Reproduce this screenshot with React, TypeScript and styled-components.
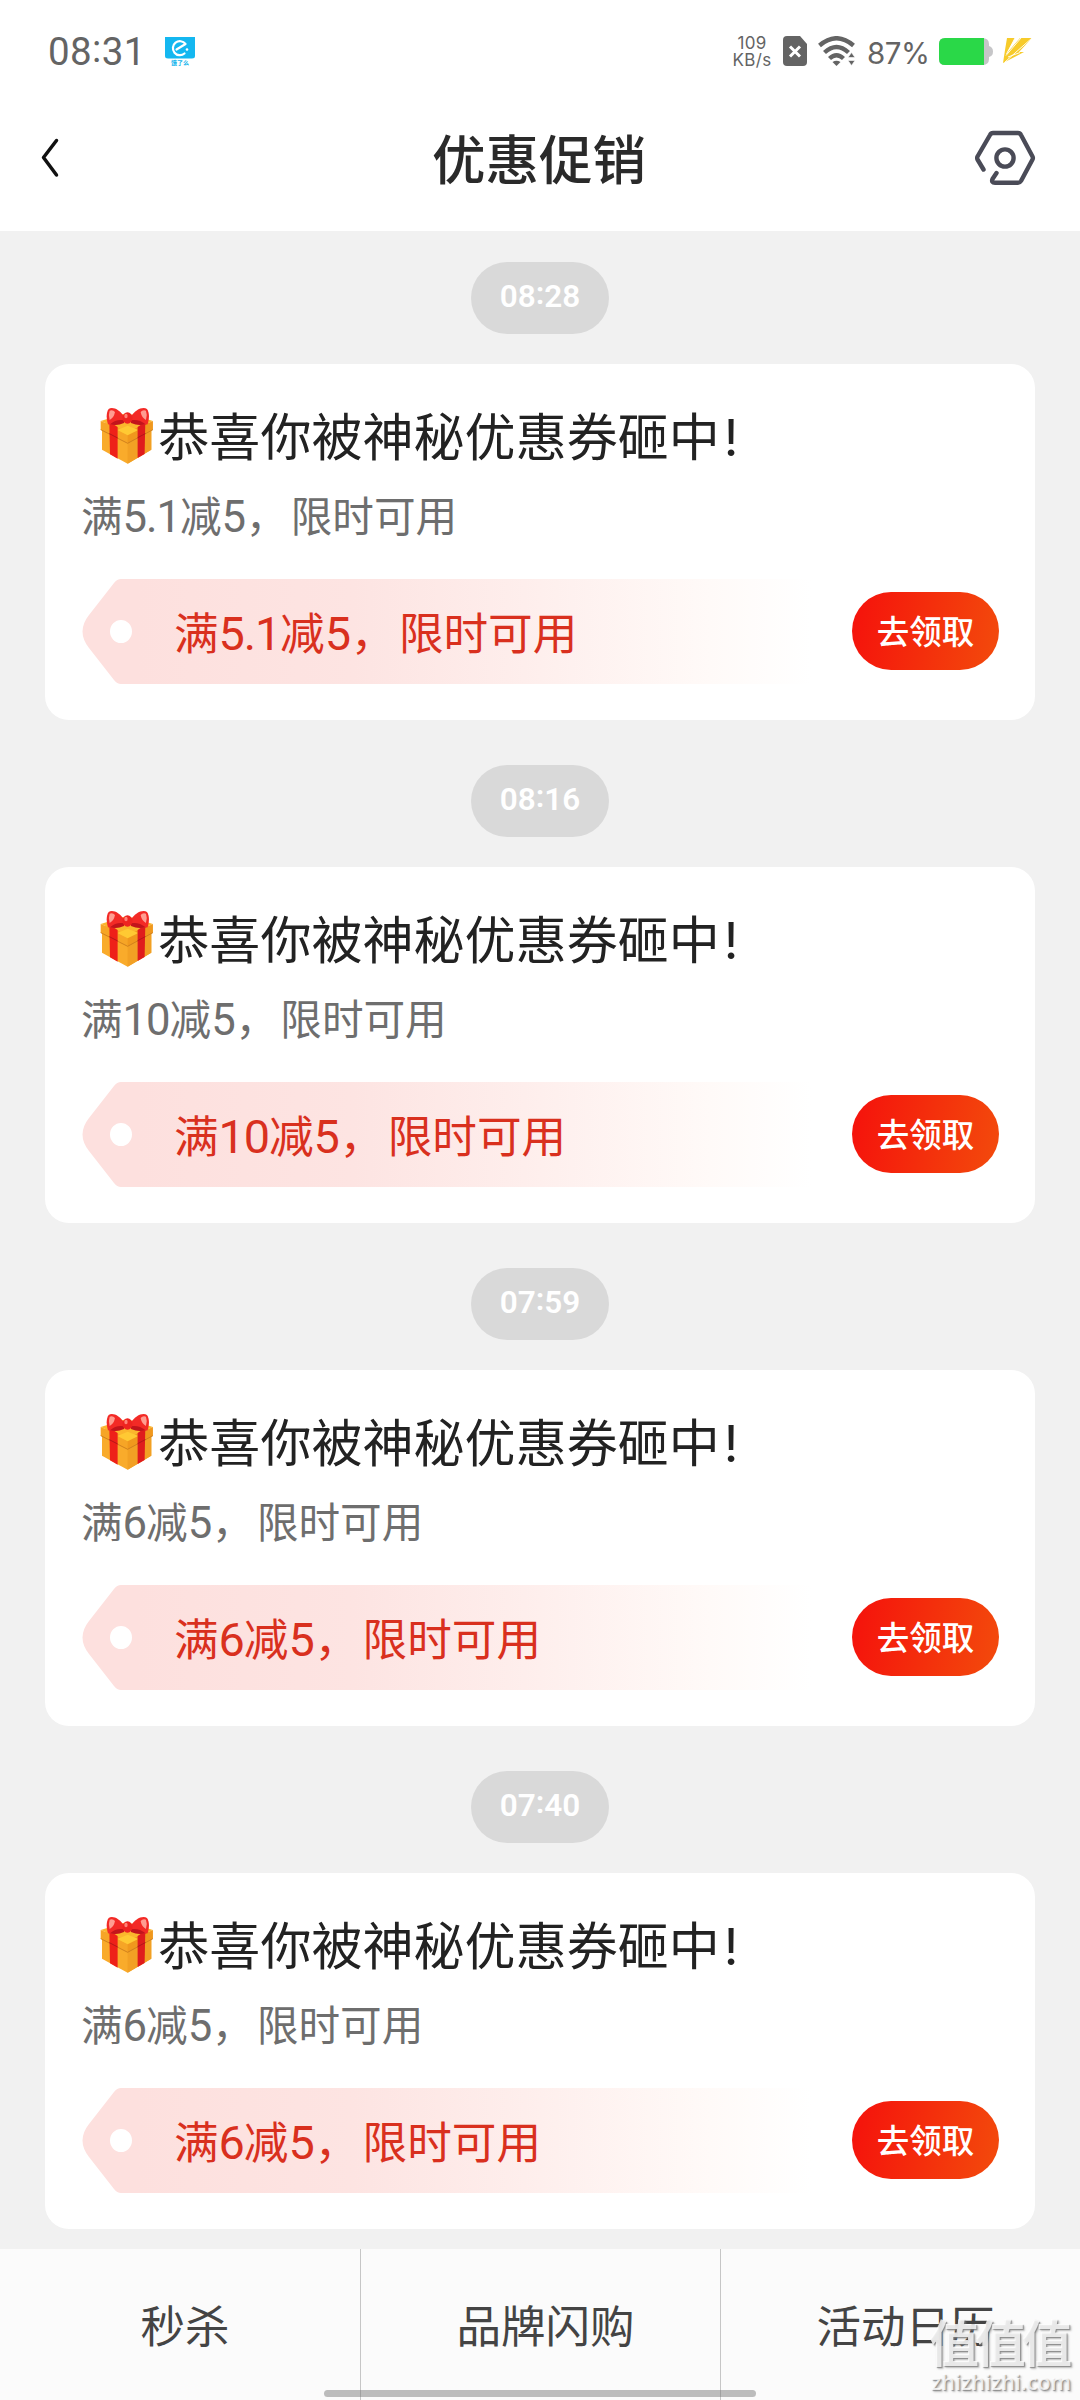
import React from 'react';
import styled, { createGlobalStyle } from 'styled-components';

const Global = createGlobalStyle`
  * { box-sizing: border-box; }
  body { margin: 0; background: #f1f1f1; }
`;

const latin = `Roboto, "Noto Sans CJK SC", sans-serif`;
const round = `Inter, "Noto Sans CJK SC", sans-serif`;

const Screen = styled.div`
  width: 1080px;
  height: 2400px;
  display: flex;
  flex-direction: column;
  background: #f1f1f1;
  font-family: ${round};
  overflow: hidden;
  position: relative;
`;

const StatusBar = styled.div`
  height: 100px;
  flex: none;
  background: #fff;
  color: #646464;
  display: flex;
  align-items: center;
  padding: 2px 47px 0 48px;
`;

const Clock = styled.div`
  font: 400 38.5px/46px ${latin};
  width: 117px;
  letter-spacing: 0.4px;
  padding-top: 1px;
  white-space: nowrap;
`;

const Colon = styled.span`
  display: inline-block;
  line-height: 1;
  transform: translateY(-8%);
`;

const AppBadge = styled.div`
  width: 30px;
  height: 29px;
  display: flex;
  flex-direction: column;
  align-items: center;
`;

const BadgeLabel = styled.span`
  font: 700 6px/7px ${round};
  color: #14b4ec;
  white-space: nowrap;
`;

const Grow = styled.div`
  flex: 1;
`;

const Speed = styled.div`
  display: flex;
  flex-direction: column;
  align-items: center;
  width: 38px;
  font: 400 17px/17px ${round};
  letter-spacing: 0.3px;
  padding-top: 1px;
  margin-right: 12px;
`;

const Battery = styled.div`
  font: 400 29.5px/40px ${round};
  width: 62px;
  letter-spacing: -0.5px;
  margin: 3px 10px 0 11px;
  white-space: nowrap;
`;

const BoltIcon = styled.svg`
  margin-left: 9px;
`;

const WifiIcon = styled.svg`
  margin-left: 11px;
`;

const NavBar = styled.div`
  height: 131px;
  flex: none;
  background: #fff;
  display: grid;
  grid-template-columns: 120px 1fr 120px;
  align-items: center;
  padding: 0 0 15px;
`;

const NavTitle = styled.div`
  text-align: center;
  font: 500 53.5px/80px ${round};
  color: #2a2a2a;
  padding: 6px 2px 0 0;
`;

const BackIcon = styled.svg`
  margin-left: 40px;
`;

const GearIcon = styled.svg`
  justify-self: end;
  margin-right: 43px;
`;

const Feed = styled.div`
  flex: 1;
  min-height: 0;
  padding: 31px 45px 0;
  display: flex;
  flex-direction: column;
`;

const Group = styled.div`
  display: flex;
  flex-direction: column;
  align-items: center;
  height: 503px;
  flex: none;
`;

const TimePill = styled.div`
  height: 72px;
  flex: none;
  padding: 0 29px;
  border-radius: 36px;
  background: #d9d9d9;
  color: #fff;
  font: 600 31.5px/70px ${latin};
  margin-bottom: 30px;
`;

const Card = styled.div`
  width: 990px;
  height: 356px;
  border-radius: 24px;
  background: #fff;
  padding: 40px 36px 36px;
  display: flex;
  flex-direction: column;
`;

const CardTitle = styled.div`
  display: flex;
  align-items: center;
  height: 64px;
  padding-left: 19px;
  color: #222;
`;

const TitleText = styled.span`
  font: 400 51px/64px ${round};
  letter-spacing: 0.05px;
  margin: 3px 0 0 5px;
  white-space: nowrap;
`;

const Bang = styled.span`
  margin-left: 4px;
`;

const Desc = styled.div`
  margin-top: 19px;
  height: 60px;
  font: 400 41.6px/62px ${latin};
  color: #6e6e6e;
  white-space: nowrap;
`;

const CouponRow = styled.div`
  display: flex;
  align-items: center;
  justify-content: space-between;
  margin-top: 32px;
  height: 105px;
`;

const Coupon = styled.div`
  display: flex;
  align-items: center;
  height: 105px;
`;

const TagHead = styled.svg`
  flex: none;
`;

const CouponBody = styled.div`
  width: 674px;
  height: 105px;
  padding-left: 37px;
  background: linear-gradient(90deg, #fde0de 0%, #fde4e2 32%, #feefed 60%, #fffaf8 85%, #fff 100%);
  font: 400 44.6px/113px ${latin};
  color: #d9301e;
  white-space: nowrap;
`;

const Digits = styled.span`
  font-size: 1.05em;
  letter-spacing: -0.025em;
  line-height: 1;
`;

const Comma = styled.span`
  margin: 0 0.08em 0 0.02em;
`;

const Claim = styled.button`
  width: 147px;
  height: 78px;
  border: 0;
  margin-bottom: 2px;
  padding: 4px 0 0;
  border-radius: 39px;
  background: linear-gradient(100deg, #f5140c 5%, #f3480c 95%);
  color: #fff;
  font: 500 32.5px/74px ${round};
`;

const TabBar = styled.div`
  height: 151px;
  flex: none;
  background: #fbfbfb;
  display: grid;
  grid-template-columns: 361px 360px 359px;
`;

const Tab = styled.div<{ $last?: boolean }>`
  border-right: ${(p) => (p.$last ? '0' : '1px solid #c6c6c6')};
  text-align: center;
  padding-left: 10px;
  height: 151px;
  font: 400 44.5px/156px ${round};
  color: #444;
`;

const HomeIndicator = styled.div`
  position: absolute;
  left: 324px;
  top: 2390px;
  width: 432px;
  height: 7px;
  border-radius: 4px;
  background: rgba(120, 120, 120, 0.48);
`;

const Watermark = styled.div`
  position: absolute;
  left: 929px;
  top: 2317px;
  width: 148px;
  color: rgba(255, 255, 255, 0.8);
  text-shadow: 1px 1px 1px rgba(120, 120, 120, 0.75), 2px 2px 2px rgba(140, 140, 140, 0.5);
`;

const WatermarkName = styled.div`
  font: 700 50px/54px ${round};
  letter-spacing: -3.5px;
  white-space: nowrap;
`;

const WatermarkSite = styled.div`
  font: 600 21.5px/22px "Open Sans", sans-serif;
  white-space: nowrap;
  padding-left: 2px;
`;

function GiftIcon() {
  return (
    <svg width="53.3" height="57.3" viewBox="60 52 160 172">
      <path d="M66 105 L143 80 L214 105 V180 L143 222 L66 180Z" fill="#f9ab2b" />
      <path d="M143 150 L214 115 V180 L143 222Z" fill="#f2a024" />
      <path d="M62 94 L140 70 L219 94 L143 128Z" fill="#fbb62d" />
      <path d="M62 94 L143 126 V161 L62 120Z" fill="#f6a526" />
      <path d="M219 94 L143 126 V161 L219 120Z" fill="#f0981d" />
      <path d="M62 120 L143 161 L219 120" fill="none" stroke="#c97a1c" strokeWidth="2.5" />
      <path d="M112 121 L143 108 L175 121 L143 137Z" fill="#ffc933" />
      <path d="M88 96 L113 112 V207 L90 194Z" fill="#ee2019" />
      <path d="M196 96 L173 112 V205 L194 193Z" fill="#df1c1d" />
      <path d="M88 132 L113 145 M196 132 L173 144" stroke="#a81518" strokeWidth="2.5" />
      <path d="M134 84 C120 58 96 50 86 58 C78 68 79 88 84 104 C98 110 120 104 134 94Z" fill="#f32a26" />
      <path d="M151 84 C165 58 190 50 201 58 C209 68 208 88 203 104 C188 110 166 104 151 94Z" fill="#f32a26" />
      <path d="M132 92 Q108 88 90 104 Q112 109 132 100Z M153 92 Q177 88 197 104 Q174 109 153 100Z" fill="#c2141b" />
      <path d="M89 63 Q99 60 105 67 Q102 84 89 91 Q84 76 89 63Z M198 63 Q188 60 182 67 Q185 84 198 91 Q203 76 198 63Z" fill="#ff9d91" />
      <ellipse cx="142.500" cy="85" rx="15" ry="17" fill="#ee2420" />
      <ellipse cx="138" cy="79" rx="5" ry="7" fill="#ff8377" />
    </svg>
  );
}

function Time({ value }: { value: string }) {
  const [h, m] = value.split(':');
  return (
    <>
      {h}
      <Colon>:</Colon>
      {m}
    </>
  );
}

function Offer({ min, off }: { min: string; off: string }) {
  return (
    <>
      满<Digits>{min}</Digits>减<Digits>{off}</Digits>
      <Comma>，</Comma>限时可用
    </>
  );
}

const groups = [
  { time: '08:28', min: '5.1', off: '5' },
  { time: '08:16', min: '10', off: '5' },
  { time: '07:59', min: '6', off: '5' },
  { time: '07:40', min: '6', off: '5' },
];

export default function App() {
  return (
    <Screen>
      <Global />
      <StatusBar>
        <Clock>
          <Time value="08:31" />
        </Clock>
        <AppBadge>
          <svg width="30" height="22" viewBox="0 0 30 22">
            <path d="M0 0 H30 V19 Q30 21.500 27 21.500 H3 Q0 21.500 0 19Z" fill="#14b7f0" />
            <path d="M19.500 16.500 A7 7 0 1 1 20.500 7 L11.500 12.500" fill="none" stroke="#fff" strokeWidth="2.2" strokeLinecap="round" strokeLinejoin="round" />
            <circle cx="22" cy="12.500" r="1.300" fill="#fff" />
          </svg>
          <BadgeLabel>饿了么</BadgeLabel>
        </AppBadge>
        <Grow />
        <Speed>
          <span>109</span>
          <span>KB/s</span>
        </Speed>
        <svg width="24" height="30" viewBox="0 0 24 30">
          <path d="M4 0 H17 L24 8 V26 Q24 30 20 30 H4 Q0 30 0 26 V4 Q0 0 4 0Z" fill="#646464" />
          <path d="M7 10.500 L17 20.500 M17 10.500 L7 20.500" stroke="#fff" strokeWidth="3" />
        </svg>
        <WifiIcon width="38" height="30" viewBox="0 0 38 30">
          <g fill="none" stroke="#646464" strokeWidth="4.4">
            <path d="M1.500 9.500 Q18.500 -5 35.500 9.500" />
            <path d="M6.500 16.500 Q18.500 5.500 30.500 16.500" />
            <path d="M11.500 22.500 Q18.500 16 25.500 22.500" />
          </g>
          <path d="M14.500 26 Q18.500 23.500 22.500 26 L18.500 30Z" fill="#646464" />
          <path d="M30 21.500 L33.500 16.500 L37 21.500Z M30 24.500 H37 L33.500 29.500Z" fill="#646464" stroke="#fff" strokeWidth="0.6" />
        </WifiIcon>
        <Battery>87%</Battery>
        <svg width="54" height="27" viewBox="0 0 54 27">
          <path d="M6 0 H43 Q50 0 50 6 V8 Q54 9 54 13.500 Q54 18 50 19 V21 Q50 27 43 27 H6 Q0 27 0 21 V6 Q0 0 6 0Z" fill="#c6c6c8" />
          <path d="M6 0 H45 V27 H6 Q0 27 0 21 V6 Q0 0 6 0Z" fill="#2ad848" />
        </svg>
        <BoltIcon width="31" height="26" viewBox="0 0 31 26">
          <path d="M5 0 H13 L5 15 L18 0 H30 L17 14 L22 14 L1 25 L3 12Z" fill="#f7cb2a" />
          <path d="M13 0 L4.500 16 M19 0 L4 17.500 M30 0 L13 15 L3 24 M18 14.500 L6 19" stroke="#fff" strokeWidth="0.9" fill="none" />
        </BoltIcon>
      </StatusBar>
      <NavBar>
        <BackIcon width="20" height="40" viewBox="0 0 20 40">
          <path d="M16.500 2.500 L3.500 19.500 L16.500 37" fill="none" stroke="#111" strokeWidth="3.5" strokeLinecap="round" strokeLinejoin="round" />
        </BackIcon>
        <NavTitle>优惠促销</NavTitle>
        <GearIcon width="64" height="58" viewBox="973 129 64 58">
          <g fill="none" stroke="#4a4b57" strokeWidth="4.4" strokeLinecap="round" strokeLinejoin="round">
            <path d="M983.500 169.500 L977.500 159.500 Q976.800 158 977.500 156.500 L990 135 Q991 133 993 133 H1018 Q1020 133 1021 135 L1032.500 156.500 Q1033.300 158 1032.500 159.500 L1021 181 Q1020 182.700 1018 182.700 H995 Q991 182.700 992.500 179 L996.500 173" />
            <circle cx="1005" cy="158" r="8.600" />
          </g>
        </GearIcon>
      </NavBar>
      <Feed>
        {groups.map((g) => (
          <Group key={g.time}>
            <TimePill>
              <Time value={g.time} />
            </TimePill>
            <Card>
              <CardTitle>
                <GiftIcon />
                <TitleText>
                  恭喜你被神秘优惠券砸中<Bang>!</Bang>
                </TitleText>
              </CardTitle>
              <Desc>
                <Offer min={g.min} off={g.off} />
              </Desc>
              <CouponRow>
                <Coupon>
                  <TagHead width="56" height="105" viewBox="0 0 56 105">
                    <path
                      d="M56 0 H40 Q36 0 33 4 L8 36 Q-5 52.500 8 69 L33 101 Q36 105 40 105 H56Z M51 52.500 A11 11.500 0 1 0 29 52.500 A11 11.500 0 1 0 51 52.500Z"
                      fill="#fde0de"
                      fillRule="evenodd"
                    />
                  </TagHead>
                  <CouponBody>
                    <Offer min={g.min} off={g.off} />
                  </CouponBody>
                </Coupon>
                <Claim>去领取</Claim>
              </CouponRow>
            </Card>
          </Group>
        ))}
      </Feed>
      <TabBar>
        <Tab>秒杀</Tab>
        <Tab>品牌闪购</Tab>
        <Tab $last>活动日历</Tab>
      </TabBar>
      <HomeIndicator />
      <Watermark>
        <WatermarkName>值值值</WatermarkName>
        <WatermarkSite>zhizhizhi.com</WatermarkSite>
      </Watermark>
    </Screen>
  );
}
